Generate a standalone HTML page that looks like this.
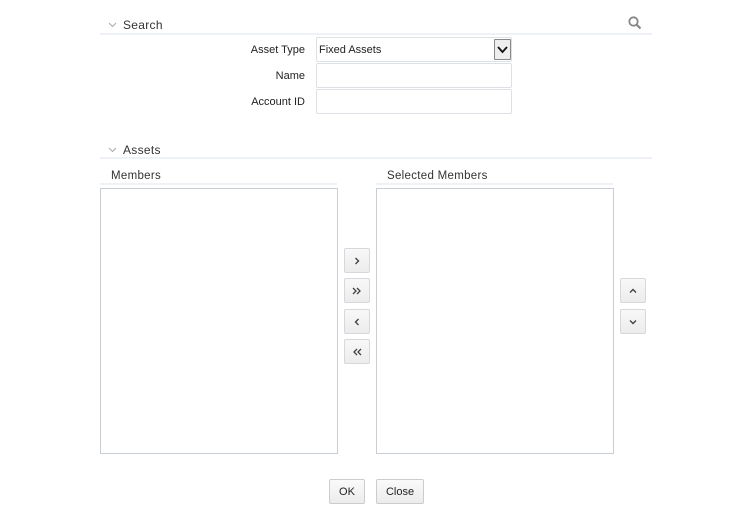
<!DOCTYPE html>
<html><head><meta charset="utf-8"><style>
body{margin:0;width:755px;height:508px;background:#fff;font-family:"Liberation Sans",sans-serif;font-size:11px;color:#222;position:relative;overflow:hidden}
.a{position:absolute}
.hd{font-size:12px;color:#333;letter-spacing:.3px}
.line{position:absolute;height:2px;background:#eef1f5}
.lbl{position:absolute;right:450px;text-align:right;font-size:11px}
.inp{position:absolute;left:316px;width:194px;height:23px;border:1px solid #dde1e6;border-radius:2px;background:#fff}
.box{position:absolute;border:1px solid #c8ced6;background:#fff}
.btn{position:absolute;width:26px;height:25px;border:1px solid #d6d8db;background:linear-gradient(#f8f8f8,#ececec);border-radius:2px;box-sizing:border-box;display:flex;align-items:center;justify-content:center}
.pb{position:absolute;height:25px;border:1px solid #ccc;background:linear-gradient(#fafafa,#ececec);box-sizing:border-box;font-size:11px;display:flex;align-items:center;justify-content:center;border-radius:2px}
</style></head><body>
<svg class="a" style="left:108px;top:22px" width="9" height="6"><path d="M1 1L4.5 4.5L8 1" fill="none" stroke="#aaa" stroke-width="1"/></svg>
<div class="a hd" style="left:123px;top:18px">Search</div>
<svg class="a" style="left:628px;top:16px" width="14" height="14"><circle cx="5.5" cy="5.5" r="4.2" fill="none" stroke="#888" stroke-width="1.8"/><path d="M8.5 8.5L12.5 12.5" stroke="#888" stroke-width="2.2"/></svg>
<div class="line" style="left:100px;top:33px;width:552px"></div>
<div class="lbl" style="top:44px">Asset Type</div>
<div class="inp" style="top:37px"><span class="a" style="left:2px;top:6px">Fixed Assets</span>
<div class="a" style="left:177px;top:1px;width:15px;height:19px;border:1px solid #888;background:#eee;border-radius:1px"><svg width="15" height="19"><path d="M3 7L7.5 12L12 7" fill="none" stroke="#111" stroke-width="1.8"/></svg></div></div>
<div class="lbl" style="top:70px">Name</div>
<div class="inp" style="top:63px"></div>
<div class="lbl" style="top:96px">Account ID</div>
<div class="inp" style="top:89px"></div>
<svg class="a" style="left:108px;top:147px" width="9" height="6"><path d="M1 1L4.5 4.5L8 1" fill="none" stroke="#aaa" stroke-width="1"/></svg>
<div class="a hd" style="left:123px;top:143px">Assets</div>
<div class="line" style="left:100px;top:157px;width:552px"></div>
<div class="a hd" style="left:111px;top:170px;font-size:11.5px">Members</div>
<div class="a hd" style="left:387px;top:170px;font-size:11.5px">Selected Members</div>
<div class="line" style="left:100px;top:183px;width:237px"></div>
<div class="line" style="left:376px;top:183px;width:237px"></div>
<div class="box" style="left:100px;top:188px;width:236px;height:264px"></div>
<div class="box" style="left:376px;top:188px;width:236px;height:264px"></div>
<div class="btn" style="left:344px;top:248px"><svg width="10" height="10"><path d="M3.5 2L6.5 5L3.5 8" fill="none" stroke="#444" stroke-width="1.4"/></svg></div>
<div class="btn" style="left:344px;top:278px"><svg width="12" height="10"><path d="M2 2L5 5L2 8M6 2L9 5L6 8" fill="none" stroke="#444" stroke-width="1.3"/></svg></div>
<div class="btn" style="left:344px;top:309px"><svg width="10" height="10"><path d="M6.5 2L3.5 5L6.5 8" fill="none" stroke="#444" stroke-width="1.4"/></svg></div>
<div class="btn" style="left:344px;top:339px"><svg width="12" height="10"><path d="M6 2L3 5L6 8M10 2L7 5L10 8" fill="none" stroke="#444" stroke-width="1.3"/></svg></div>
<div class="btn" style="left:620px;top:278px"><svg width="10" height="10"><path d="M2 6.5L5 3.5L8 6.5" fill="none" stroke="#444" stroke-width="1.4"/></svg></div>
<div class="btn" style="left:620px;top:309px"><svg width="10" height="10"><path d="M2 3.5L5 6.5L8 3.5" fill="none" stroke="#444" stroke-width="1.4"/></svg></div>
<div class="pb" style="left:329px;top:479px;width:36px">OK</div>
<div class="pb" style="left:376px;top:479px;width:48px">Close</div>
</body></html>
